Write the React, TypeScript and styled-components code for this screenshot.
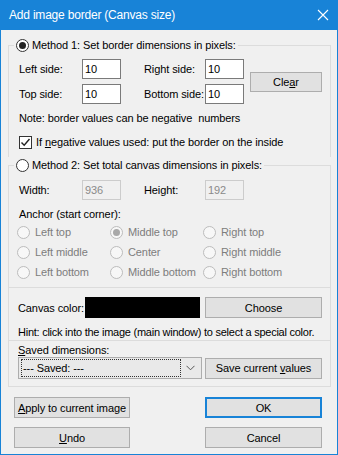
import React from "react"
import styled, { createGlobalStyle } from "styled-components"

const GlobalStyle = createGlobalStyle`
  html, body {
    margin: 0;
    padding: 0;
    background: #f0f0f0;
  }
  body {
    font-family: "Liberation Sans", Arial, sans-serif;
    font-size: 11px;
    letter-spacing: -0.1px;
    color: #000;
  }
`

const ACCENT = "#1883d7"
const FRAME = "#dcdcdc"

const Window = styled.div`
  width: 338px;
  height: 455px;
  box-sizing: border-box;
  border: 1px solid ${ACCENT};
  border-top: none;
  background: #f0f0f0;
  display: flex;
  flex-direction: column;
`

const TitleBar = styled.div`
  height: 30px;
  flex: none;
  background: ${ACCENT};
  color: #fff;
  display: flex;
  align-items: center;
  justify-content: space-between;
  padding: 0 8px 0 8px;
  font-size: 12px;
  letter-spacing: -0.2px;
`

const Client = styled.div`
  flex: 1;
  padding: 0 6px 0 7px;
  display: flex;
  flex-direction: column;
`

const Group = styled.fieldset<{ $open?: boolean; $top?: number }>`
  margin: ${(p) => p.$top ?? 0}px 0 0;
  padding: 0;
  min-width: 0;
  border: 1px solid ${FRAME};
  ${(p) => (p.$open ? "border-bottom: none;" : "")}
`

const Legend = styled.legend`
  margin-left: 5px;
  padding: 0 2px;
  height: 16px;
  display: flex;
  align-items: center;
  gap: 3px;
`

const Panel = styled.div<{ $pad: string }>`
  border: 1px solid ${FRAME};
  border-top: none;
  padding: ${(p) => p.$pad};
`

const Body = styled.div<{ $pad: string }>`
  padding: ${(p) => p.$pad};
`

const SidesGrid = styled.div<{ $cols: string }>`
  display: grid;
  grid-template-columns: ${(p) => p.$cols};
  grid-auto-rows: 20px;
  row-gap: 5px;
  align-items: center;
`

const Label = styled.span<{ $indent?: number; $width?: number }>`
  padding-left: ${(p) => p.$indent ?? 0}px;
  ${(p) => (p.$width ? `width: ${p.$width}px; flex: none;` : "")}
  white-space: nowrap;
`

const Edit = styled.div<{ $disabled?: boolean }>`
  width: 39px;
  height: 20px;
  box-sizing: border-box;
  border: 1px solid ${(p) => (p.$disabled ? "#cccccc" : "#7a7a7a")};
  background: ${(p) => (p.$disabled ? "#f0f0f0" : "#fff")};
  color: ${(p) => (p.$disabled ? "#8a8a8a" : "#000")};
  padding-left: 2px;
  display: flex;
  align-items: center;
`

const Button = styled.div<{ $w: number; $h?: number; $default?: boolean; $gapLeft?: number }>`
  width: ${(p) => p.$w}px;
  height: ${(p) => p.$h ?? 21}px;
  flex: none;
  margin-left: ${(p) => p.$gapLeft ?? 0}px;
  box-sizing: border-box;
  background: #e1e1e1;
  border: ${(p) => (p.$default ? `2px solid ${ACCENT}` : "1px solid #adadad")};
  display: flex;
  align-items: center;
  justify-content: center;
  white-space: nowrap;
`

const ClearButton = styled(Button)`
  grid-column: 5;
  grid-row: 1 / span 2;
  justify-self: end;
`

const TextLine = styled.div<{ $top: number; $h?: number; $indent?: number; $tight?: boolean }>`
  margin-top: ${(p) => p.$top}px;
  height: ${(p) => p.$h ?? 16}px;
  line-height: ${(p) => p.$h ?? 16}px;
  padding-left: ${(p) => p.$indent ?? 0}px;
  white-space: nowrap;
  ${(p) => (p.$tight ? "letter-spacing: -0.25px;" : "")}
`

const CheckRow = styled.div`
  margin-top: 8px;
  height: 16px;
  display: flex;
  align-items: center;
  gap: 4px;
`

const CheckBox = styled.span`
  width: 13px;
  height: 13px;
  box-sizing: border-box;
  border: 1px solid #333;
  background: #fff;
  display: flex;
  align-items: center;
  justify-content: center;
`

const RadioDot = styled.span<{ $checked?: boolean; $disabled?: boolean }>`
  width: 13px;
  height: 13px;
  flex: none;
  box-sizing: border-box;
  border-radius: 50%;
  border: 1px solid ${(p) => (p.$disabled ? "#bcbcbc" : "#333")};
  background: ${(p) => (p.$disabled ? "#f7f7f7" : "#fff")};
  display: flex;
  align-items: center;
  justify-content: center;
  &::after {
    content: "";
    width: 7px;
    height: 7px;
    border-radius: 50%;
    background: ${(p) => (p.$disabled ? "#a8a8a8" : "#222")};
    display: ${(p) => (p.$checked ? "block" : "none")};
  }
`

const AnchorGrid = styled.div`
  display: grid;
  grid-template-columns: 93px 93px 93px;
  grid-auto-rows: 20px;
`

const AnchorItem = styled.div`
  display: flex;
  align-items: center;
  gap: 5px;
  color: #7d7d7d;
`

const Row = styled.div<{ $gap: number }>`
  display: flex;
  align-items: center;
  gap: ${(p) => p.$gap}px;
`

const ColorWell = styled.div`
  width: 115px;
  height: 21px;
  flex: none;
  background: #000;
`

const Combo = styled.div`
  width: 184px;
  height: 22px;
  flex: none;
  box-sizing: border-box;
  border: 1px solid #adadad;
  background: #e9e9e9;
  display: flex;
  align-items: center;
  padding: 0 6px 0 2px;
  gap: 5px;
`

const Focus = styled.div`
  flex: 1;
  height: 16px;
  border: 1px dotted #333;
  display: flex;
  align-items: center;
  padding-left: 1px;
`

const Footer = styled.div`
  margin: 10px 0 0 6px;
  display: grid;
  grid-template-columns: 191px 117px;
  grid-auto-rows: 21px;
  row-gap: 9px;
`

const anchors = [
  "Left top",
  "Middle top",
  "Right top",
  "Left middle",
  "Center",
  "Right middle",
  "Left bottom",
  "Middle bottom",
  "Right bottom",
]

const CloseIcon = () => (
  <svg width="12" height="12" viewBox="0 0 12 12">
    <path d="M1 1 L11 11 M11 1 L1 11" stroke="#fff" strokeWidth="1.1" />
  </svg>
)

const Check = () => (
  <svg width="11" height="11" viewBox="0 0 11 11">
    <path d="M1.5 5.5 L4.2 8.3 L9.5 2" fill="none" stroke="#222" strokeWidth="1.4" />
  </svg>
)

const Chevron = () => (
  <svg width="9" height="6" viewBox="0 0 9 6">
    <path d="M0.5 0.8 L4.5 4.8 L8.5 0.8" fill="none" stroke="#555" strokeWidth="1" />
  </svg>
)

export default function App() {
  return (
    <>
      <GlobalStyle />
      <Window>
        <TitleBar>
          <span>Add image border (Canvas size)</span>
          <CloseIcon />
        </TitleBar>
        <Client>
          <Group $open $top={7}>
            <Legend>
              <RadioDot $checked />
              Method 1: Set border dimensions in pixels:
            </Legend>
            <Body $pad="6px 0 7px 10px">
              <SidesGrid $cols="63px 39px 84px 39px 78px">
                <Label>Left side:</Label>
                <Edit>10</Edit>
                <Label $indent={23}>Right side:</Label>
                <Edit>10</Edit>
                <ClearButton $w={72} $h={20}>
                  <span>
                    Cle<u>a</u>r
                  </span>
                </ClearButton>
                <Label>Top side:</Label>
                <Edit>10</Edit>
                <Label $indent={23}>Bottom side:</Label>
                <Edit>10</Edit>
              </SidesGrid>
              <TextLine $top={6}>Note: border values can be negative&nbsp; numbers</TextLine>
              <CheckRow>
                <CheckBox>
                  <Check />
                </CheckBox>
                <span>
                  If <u>n</u>egative values used: put the border on the inside
                </span>
              </CheckRow>
            </Body>
          </Group>

          <Group>
            <Legend>
              <RadioDot />
              Method 2: Set total canvas dimensions in pixels:
            </Legend>
            <Body $pad="7px 0 5px 8px">
              <SidesGrid $cols="65px 39px 84px 39px">
                <Label $indent={2}>Width:</Label>
                <Edit $disabled>936</Edit>
                <Label $indent={23}>Height:</Label>
                <Edit $disabled>192</Edit>
              </SidesGrid>
              <TextLine $top={6} $indent={2}>
                Anchor (start corner):
              </TextLine>
              <AnchorGrid>
                {anchors.map((a) => (
                  <AnchorItem key={a}>
                    <RadioDot $disabled $checked={a === "Middle top"} />
                    {a}
                  </AnchorItem>
                ))}
              </AnchorGrid>
            </Body>
          </Group>

          <Panel $pad="9px 0 0 9px">
            <Row $gap={0}>
              <Label $width={67}>Canvas color:</Label>
              <ColorWell />
              <Button $w={117} $gapLeft={5}>
                Choose
              </Button>
            </Row>
            <TextLine $top={6} $tight>
              Hint: click into the image (main window) to select a special color.
            </TextLine>
          </Panel>

          <Panel $pad="2px 0 7px 9px">
            <TextLine $top={0} $h={14}>
              <u>S</u>aved dimensions:
            </TextLine>
            <Row $gap={3}>
              <Combo>
                <Focus>--- Saved: ---</Focus>
                <Chevron />
              </Combo>
              <Button $w={117}>
                <span>
                  Save current <u>v</u>alues
                </span>
              </Button>
            </Row>
          </Panel>

          <Footer>
            <Button $w={116}>
              <span>
                <u>A</u>pply to current image
              </span>
            </Button>
            <Button $w={117} $default>
              OK
            </Button>
            <Button $w={116}>
              <span>
                <u>U</u>ndo
              </span>
            </Button>
            <Button $w={117}>Cancel</Button>
          </Footer>
        </Client>
      </Window>
    </>
  )
}
